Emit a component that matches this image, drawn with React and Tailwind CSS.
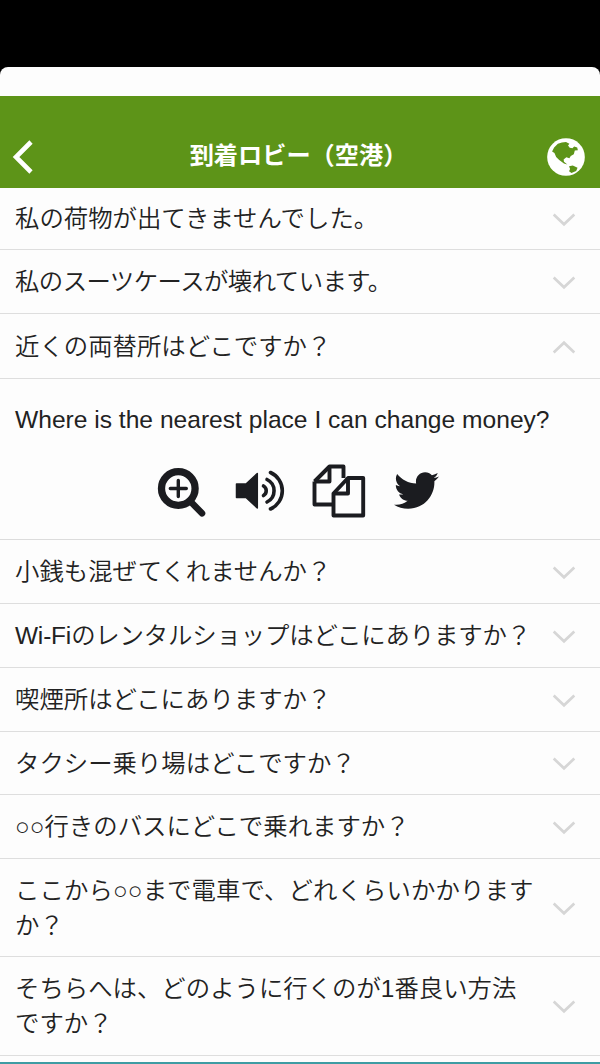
import React, { useState } from 'react'
import { FaTwitter } from 'react-icons/fa'

const phrases = [
  { ja: '私の荷物が出てきませんでした。', size: 'h-[62px]', spacing: 'tracking-normal' },
  { ja: '私のスーツケースが壊れています。', size: 'h-[64px]', spacing: 'tracking-[-0.55px]' },
  {
    ja: '近くの両替所はどこですか？',
    en: 'Where is the nearest place I can change money?',
    size: 'h-[65px]',
    spacing: 'tracking-normal',
  },
  { ja: '小銭も混ぜてくれませんか？', size: 'h-[64px]', spacing: 'tracking-normal' },
  { ja: 'Wi-Fiのレンタルショップはどこにありますか？', size: 'h-[64px]', spacing: 'tracking-[-0.15px]' },
  { ja: '喫煙所はどこにありますか？', size: 'h-[64px]', spacing: 'tracking-normal' },
  { ja: 'タクシー乗り場はどこですか？', size: 'h-[63px]', spacing: 'tracking-normal' },
  { ja: '○○行きのバスにどこで乗れますか？', size: 'h-[64px]', spacing: 'tracking-normal' },
  { ja: 'ここから○○まで電車で、どれくらいかかりますか？', size: 'h-[98px]', spacing: 'tracking-[0.1px]' },
  { ja: 'そちらへは、どのように行くのが1番良い方法ですか？', size: 'h-[99px]', spacing: 'tracking-normal' },
]

function Chevron({ up }) {
  return (
    <svg width="24" height="14" viewBox="0 0 24 14" className={`mt-[2px] shrink-0 ${up ? 'rotate-180' : ''}`}>
      <path d="M1.7 1.5 12 11.3 22.3 1.5" fill="none" stroke="#d6d6d6" strokeWidth="2.7" />
    </svg>
  )
}

function GlobeIcon() {
  return (
    <svg width="38" height="38" viewBox="0 0 112 112">
      <circle cx="56" cy="56" r="55.5" fill="#fff" />
      <g fill="#5d9418">
        <path d="M15 40 21 28 32 17 44 13 56 12 66 17 62 22 67 29 75 30 80 25 89 28 91 36 82 37 79 48 70 53 66 60 57 57 49 63 50 70 60 78 50 75 36 65 27 56 22 44Z" />
        <path d="M65 83 76 81 90 88 86 97 72 103 65 98 68 91Z" />
      </g>
    </svg>
  )
}

function ZoomIcon() {
  return (
    <svg width="50" height="50" viewBox="0 0 50 50" fill="none" stroke="#1b1c20">
      <circle cx="21.3" cy="20.5" r="16.8" strokeWidth="7.3" />
      <path d="M21.3 12.500v16M13.300 20.500h16" strokeWidth="3.4" strokeLinecap="round" />
      <path d="m33.5 33.5 11.5 11.8" strokeWidth="6.6" strokeLinecap="round" />
    </svg>
  )
}

function SpeakerIcon() {
  return (
    <svg width="50" height="50" viewBox="0 0 50 50" fill="none" stroke="#1b1c20" strokeLinecap="round">
      <path d="M1.5 16h9.5l11.3-10.5v34.5L11 29.5H1.5Z" fill="#1b1c20" strokeWidth="1.5" strokeLinejoin="round" />
      <path d="M28.5 18a5.5 5.5 0 0 1 0 9.5" strokeWidth="3.6" />
      <path d="M32 11.5a12.5 12.5 0 0 1 0 22.5" strokeWidth="3.6" />
      <path d="M35.5 4.5a20 20 0 0 1 0 36.5" strokeWidth="3.6" />
    </svg>
  )
}

function CopyIcon() {
  return (
    <svg width="54" height="54" viewBox="0 0 54 54" fill="none" stroke="#1b1c20" strokeWidth="3.9" strokeLinejoin="round">
      <path d="M2.5 17.5 17.5 2.5H31.5V14M20 40.5H2.5V17.5" />
      <path d="M2.5 17.5H17.5V2.5" />
      <path d="M36 14H51.2V51.5H21.5V29.5Z" />
      <path d="M21.5 29.5H36V14" />
    </svg>
  )
}

function Answer({ text }) {
  return (
    <div className="h-[161px] border-b border-[#dcdcdc] px-[15px]">
      <p className="pt-[22px] font-['Liberation_Sans',sans-serif] text-[24.6px] leading-[38px] whitespace-nowrap">{text}</p>
      <div className="mt-[25px] flex h-[54px] items-start pl-[142px]">
        <button className="mt-[4px]"><ZoomIcon /></button>
        <button className="mt-[4px] ml-[28px]"><SpeakerIcon /></button>
        <button className="ml-[27px]"><CopyIcon /></button>
        <button className="mt-[4px] ml-[28px]"><FaTwitter size={45} color="#1b1c20" /></button>
      </div>
    </div>
  )
}

export default function App() {
  const [open, setOpen] = useState(2)

  return (
    <div className="h-[1064px] w-[600px] overflow-hidden bg-black pt-[67px] font-['Liberation_Sans','Noto_Sans_CJK_JP',sans-serif] text-[#222]">
      <div className="h-[997px] rounded-t-[8px] bg-[#fdfdfd] pt-[29px]">
        <header className="flex h-[92px] items-end justify-between bg-[#5d9418] pr-[15px] pb-[12.5px] pl-[12px]">
          <button className="mb-[2px] w-[38px]">
            <svg width="22" height="34" viewBox="0 0 22 34">
              <path d="M19 2 4 17 19 32" fill="none" stroke="#fff" strokeWidth="4.6" />
            </svg>
          </button>
          <h1 className="mb-[1px] text-[24.2px] leading-[38px] font-bold text-white">到着ロビー（空港）</h1>
          <button><GlobeIcon /></button>
        </header>

        <ul className="font-[350]">
          {phrases.map((p, i) => (
            <li key={p.ja}>
              <div
                onClick={() => setOpen(open === i ? -1 : i)}
                className={`flex items-center justify-between border-b border-[#dedede] pr-[24px] pl-[15px] ${p.size}`}
              >
                <span className={`w-[524px] shrink-0 text-[24.4px] leading-[35px] ${p.spacing}`}>{p.ja}</span>
                <Chevron up={open === i} />
              </div>
              {open === i && p.en && <Answer text={p.en} />}
            </li>
          ))}
        </ul>
        <div className="mt-[6px] h-[4px] bg-[#3e9ca3]" />
      </div>
    </div>
  )
}
